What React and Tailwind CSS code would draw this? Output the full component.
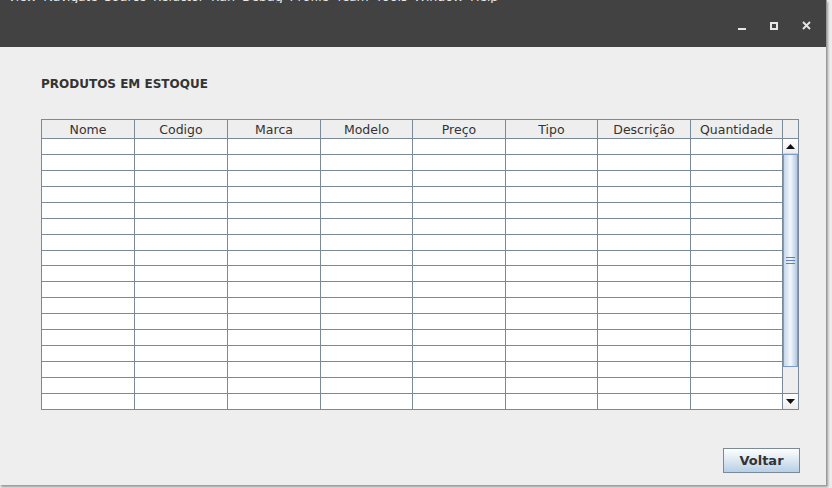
import React from "react";

const columns = [
  { name: "Nome", w: "w-[93px]" },
  { name: "Codigo", w: "w-[93px]" },
  { name: "Marca", w: "w-[93px]" },
  { name: "Modelo", w: "w-[92px]" },
  { name: "Preço", w: "w-[93px]" },
  { name: "Tipo", w: "w-[92px]" },
  { name: "Descrição", w: "w-[93px]" },
  { name: "Quantidade", w: "w-[92px]" },
];

const rows = Array.from({ length: 17 }, (_, i) => i);

const font = { fontFamily: "'DejaVu Sans', 'Liberation Sans', sans-serif" };

function WindowButtons() {
  return (
    <div className="flex items-center gap-[24px] pr-[15px] pt-[1px]">
      <svg width="8" height="10" viewBox="0 0 8 10">
        <rect x="0" y="7" width="8" height="2" fill="#e6e6e6" />
      </svg>
      <svg width="8" height="8" viewBox="0 0 8 8">
        <rect x="1" y="1" width="6" height="6" fill="none" stroke="#e6e6e6" strokeWidth="2" />
      </svg>
      <svg width="9" height="9" viewBox="0 0 9 9">
        <path d="M1 1 L8 8 M8 1 L1 8" stroke="#e6e6e6" strokeWidth="1.8" />
      </svg>
    </div>
  );
}

function ScrollBar() {
  return (
    <div className="flex flex-col w-[15px] bg-[#eeeeee]">
      <div className="h-[19px] border-b border-[#7a8a99] bg-[#eeeeee]" />
      {/* up button */}
      <div className="h-[15px] flex items-center justify-center bg-gradient-to-b from-white to-[#eeeeee] border-b border-[#c8d3de]">
        <svg width="9" height="5" viewBox="0 0 9 5">
          <path d="M4.5 0 L9 5 L0 5 Z" fill="#111" />
        </svg>
      </div>
      {/* thumb */}
      <div className="h-[213px] flex items-center justify-center border border-[#7a9ad0] bg-gradient-to-r from-[#c6d7ec] via-[#f4f8fc] to-[#b2c8e4]">
        <div className="flex flex-col gap-[2px]">
          <div className="w-[9px] h-[1px] bg-[#5d7fc0]" />
          <div className="w-[9px] h-[1px] bg-[#5d7fc0]" />
          <div className="w-[9px] h-[1px] bg-[#5d7fc0]" />
        </div>
      </div>
      {/* track */}
      <div className="flex-1 bg-[#eeeeee]" />
      {/* down button */}
      <div className="h-[16px] flex items-center justify-center bg-gradient-to-b from-white to-[#eeeeee] border-t border-[#7a8a99]">
        <svg width="9" height="5" viewBox="0 0 9 5">
          <path d="M0 0 L9 0 L4.5 5 Z" fill="#111" />
        </svg>
      </div>
    </div>
  );
}

export default function App() {
  return (
    <div className="w-[832px] h-[488px] bg-[#ececec] overflow-hidden" style={font}>
      <div className="w-[827px] h-[485px] flex flex-col bg-[#eeeeee] border-r border-[#9a9a9a] shadow-[1px_2px_2px_rgba(0,0,0,0.35)]">
        {/* title bar */}
        <div className="h-[47px] bg-[#424242] flex flex-col">
          <div className="h-[3px] overflow-hidden pl-[8px]">
            <div className="-mt-[11px] text-[13px] leading-[14px] text-[#e8e8e8] whitespace-nowrap" style={{ fontFamily: "'Noto Sans', 'DejaVu Sans', sans-serif" }}>
              View&nbsp;&nbsp;Navigate&nbsp;&nbsp;Source&nbsp;&nbsp;Refactor&nbsp;&nbsp;Run&nbsp;&nbsp;Debug&nbsp;&nbsp;Profile&nbsp;&nbsp;Team&nbsp;&nbsp;Tools&nbsp;&nbsp;Window&nbsp;&nbsp;Help
            </div>
          </div>
          <div className="flex-1 flex items-center justify-end">
            <WindowButtons />
          </div>
        </div>

        {/* body */}
        <div className="flex-1 flex flex-col pl-[41px]">
          <div className="h-[72px] flex items-center pt-[2px] text-[12px] font-bold text-[#333333]">
            PRODUTOS EM ESTOQUE
          </div>

          <div className="w-[758px] h-[291px] border border-[#7a8a99] flex">
            <div className="flex flex-col">
              <div className="flex h-[19px] border-b border-[#7a8a99] bg-[#eeeeee]">
                {columns.map((c) => (
                  <div
                    key={c.name}
                    className={`${c.w} border-r border-[#7a8a99] flex items-center justify-center pt-[2px] text-[12.5px] text-[#333333] leading-none`}
                  >
                    {c.name}
                  </div>
                ))}
              </div>
              {rows.map((r) => (
                <div key={r} className="flex h-[16px] border-b border-[#7a8a99] bg-white last:border-b-0 last:h-[15px]">
                  {columns.map((c) => (
                    <div key={c.name} className={`${c.w} border-r border-[#7a8a99]`} />
                  ))}
                </div>
              ))}
            </div>
            <ScrollBar />
          </div>

          <div className="flex justify-end pr-[26px] pt-[38px]">
            <button className="w-[77px] h-[25px] border border-[#7a8a99] bg-gradient-to-b from-white to-[#b8cfe5] text-[13px] font-bold text-[#333333] flex items-center justify-center">
              Voltar
            </button>
          </div>
        </div>
      </div>
    </div>
  );
}
